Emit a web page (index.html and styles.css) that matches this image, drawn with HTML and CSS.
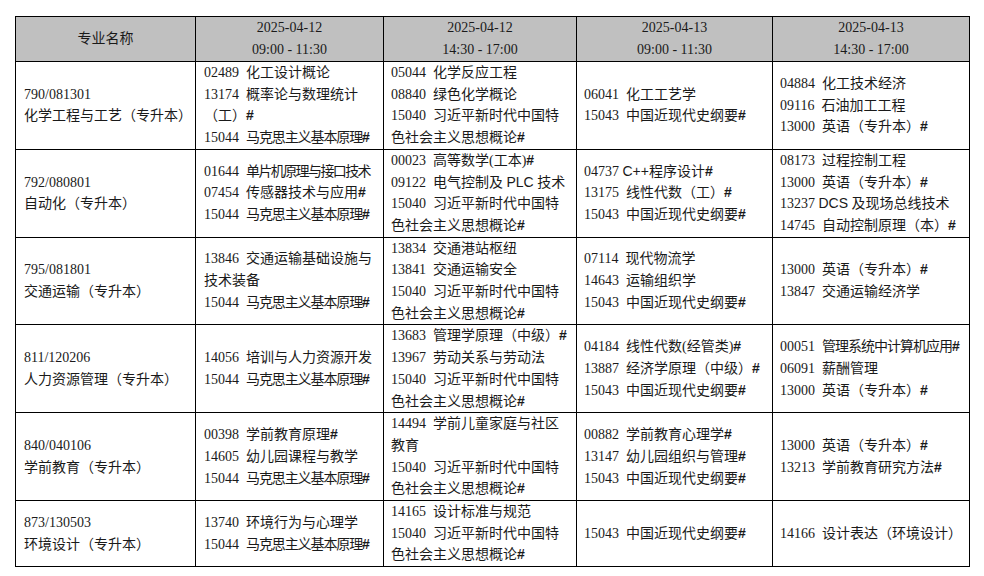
FILE: index.html
```html
<!DOCTYPE html>
<html lang="zh-CN">
<head>
<meta charset="utf-8">
<title>考试安排</title>
<link rel="stylesheet" href="styles.css">
</head>
<body>
<table class="sched">
  <colgroup>
    <col class="w1"><col class="w2"><col class="w3"><col class="w4"><col class="w5">
  </colgroup>
  <thead>
    <tr>
      <th>专业名称</th>
      <th><div>2025-04-12</div><div>09:00 - 11:30</div></th>
      <th><div>2025-04-12</div><div>14:30 - 17:00</div></th>
      <th><div>2025-04-13</div><div>09:00 - 11:30</div></th>
      <th><div>2025-04-13</div><div>14:30 - 17:00</div></th>
    </tr>
  </thead>
  <tbody>
    <tr>
      <td class="major"><div class="ln">790/081301</div><div class="ln">化学工程与工艺（专升本）</div></td>
      <td class="c2">
        <div class="ln">02489  化工设计概论</div>
        <div class="ln">13174  概率论与数理统计</div>
        <div class="ln">（工）<span class="h">#</span></div>
        <div class="ln">15044  <span class="sq1">马克思主义基本原理<span class="h">#</span></span></div>
      </td>
      <td>
        <div class="ln">05044  化学反应工程</div>
        <div class="ln">08840  绿色化学概论</div>
        <div class="ln">15040  习近平新时代中国特</div>
        <div class="ln">色社会主义思想概论<span class="h">#</span></div>
      </td>
      <td>
        <div class="ln">06041  化工工艺学</div>
        <div class="ln">15043  中国近现代史纲要<span class="h">#</span></div>
      </td>
      <td>
        <div class="ln">04884  化工技术经济</div>
        <div class="ln">09116  石油加工工程</div>
        <div class="ln">13000  英语（专升本）<span class="h">#</span></div>
      </td>
    </tr>
    <tr>
      <td class="major"><div class="ln">792/080801</div><div class="ln">自动化（专升本）</div></td>
      <td class="c2">
        <div class="ln">01644  <span class="sq2">单片机原理与接口技术</span></div>
        <div class="ln">07454  传感器技术与应用<span class="h">#</span></div>
        <div class="ln">15044  <span class="sq1">马克思主义基本原理<span class="h">#</span></span></div>
      </td>
      <td>
        <div class="ln">00023  高等数学(工本)<span class="h">#</span></div>
        <div class="ln">09122  电气控制及 <span class="lat">PLC</span> 技术</div>
        <div class="ln">15040  习近平新时代中国特</div>
        <div class="ln">色社会主义思想概论<span class="h">#</span></div>
      </td>
      <td>
        <div class="ln">04737 <span class="lat">C++</span>程序设计<span class="h">#</span></div>
        <div class="ln">13175  线性代数（工）<span class="h">#</span></div>
        <div class="ln">15043  中国近现代史纲要<span class="h">#</span></div>
      </td>
      <td>
        <div class="ln">08173  过程控制工程</div>
        <div class="ln">13000  英语（专升本）<span class="h">#</span></div>
        <div class="ln">13237 <span class="lat">DCS</span> 及现场总线技术</div>
        <div class="ln">14745  自动控制原理（本）<span class="h">#</span></div>
      </td>
    </tr>
    <tr>
      <td class="major"><div class="ln">795/081801</div><div class="ln">交通运输（专升本）</div></td>
      <td class="c2">
        <div class="ln">13846  交通运输基础设施与</div>
        <div class="ln">技术装备</div>
        <div class="ln">15044  <span class="sq1">马克思主义基本原理<span class="h">#</span></span></div>
      </td>
      <td>
        <div class="ln">13834  交通港站枢纽</div>
        <div class="ln">13841  交通运输安全</div>
        <div class="ln">15040  习近平新时代中国特</div>
        <div class="ln">色社会主义思想概论<span class="h">#</span></div>
      </td>
      <td>
        <div class="ln">07114  现代物流学</div>
        <div class="ln">14643  运输组织学</div>
        <div class="ln">15043  中国近现代史纲要<span class="h">#</span></div>
      </td>
      <td>
        <div class="ln">13000  英语（专升本）<span class="h">#</span></div>
        <div class="ln">13847  交通运输经济学</div>
      </td>
    </tr>
    <tr>
      <td class="major"><div class="ln">811/120206</div><div class="ln">人力资源管理（专升本）</div></td>
      <td class="c2">
        <div class="ln">14056  培训与人力资源开发</div>
        <div class="ln">15044  <span class="sq1">马克思主义基本原理<span class="h">#</span></span></div>
      </td>
      <td>
        <div class="ln">13683  管理学原理（中级）<span class="h">#</span></div>
        <div class="ln">13967  劳动关系与劳动法</div>
        <div class="ln">15040  习近平新时代中国特</div>
        <div class="ln">色社会主义思想概论<span class="h">#</span></div>
      </td>
      <td>
        <div class="ln">04184  线性代数(经管类)<span class="h">#</span></div>
        <div class="ln">13887  经济学原理（中级）<span class="h">#</span></div>
        <div class="ln">15043  中国近现代史纲要<span class="h">#</span></div>
      </td>
      <td>
        <div class="ln">00051  <span class="sq3">管理系统中计算机应用<span class="h">#</span></span></div>
        <div class="ln">06091  薪酬管理</div>
        <div class="ln">13000  英语（专升本）<span class="h">#</span></div>
      </td>
    </tr>
    <tr>
      <td class="major"><div class="ln">840/040106</div><div class="ln">学前教育（专升本）</div></td>
      <td class="c2">
        <div class="ln">00398  学前教育原理<span class="h">#</span></div>
        <div class="ln">14605  幼儿园课程与教学</div>
        <div class="ln">15044  <span class="sq1">马克思主义基本原理<span class="h">#</span></span></div>
      </td>
      <td>
        <div class="ln">14494  学前儿童家庭与社区</div>
        <div class="ln">教育</div>
        <div class="ln">15040  习近平新时代中国特</div>
        <div class="ln">色社会主义思想概论<span class="h">#</span></div>
      </td>
      <td>
        <div class="ln">00882  学前教育心理学<span class="h">#</span></div>
        <div class="ln">13147  幼儿园组织与管理<span class="h">#</span></div>
        <div class="ln">15043  中国近现代史纲要<span class="h">#</span></div>
      </td>
      <td>
        <div class="ln">13000  英语（专升本）<span class="h">#</span></div>
        <div class="ln">13213  学前教育研究方法<span class="h">#</span></div>
      </td>
    </tr>
    <tr>
      <td class="major"><div class="ln">873/130503</div><div class="ln">环境设计（专升本）</div></td>
      <td class="c2">
        <div class="ln">13740  环境行为与心理学</div>
        <div class="ln">15044  <span class="sq1">马克思主义基本原理<span class="h">#</span></span></div>
      </td>
      <td>
        <div class="ln">14165  设计标准与规范</div>
        <div class="ln">15040  习近平新时代中国特</div>
        <div class="ln">色社会主义思想概论<span class="h">#</span></div>
      </td>
      <td>
        <div class="ln">15043  中国近现代史纲要<span class="h">#</span></div>
      </td>
      <td>
        <div class="ln">14166  设计表达（环境设计）</div>
      </td>
    </tr>
  </tbody>
</table>
</body>
</html>
```
FILE: styles.css
```css
html, body {
  margin: 0;
  padding: 0;
  background: #ffffff;
}
body {
  padding: 16px 0 0 15px;
  font-family: "Liberation Serif", "Noto Sans CJK SC", serif;
  font-size: 14px;
  color: #1a1a1a;
}
.sched {
  border-collapse: collapse;
  table-layout: fixed;
  width: 954px;
}
.w1 { width: 180px; }
.w2 { width: 188px; }
.w3 { width: 193px; }
.w4 { width: 196px; }
.w5 { width: 197px; }
.sched th, .sched td {
  border: 1px solid #000;
  padding: 0 4px 0 7px;
  vertical-align: middle;
  text-align: left;
}
.sched th {
  background: #c0c0c0;
  font-weight: normal;
  text-align: center;
  line-height: 22px;
  padding: 0;
}
.sched td {
  line-height: 21.7px;
}
.sched td.major,
.sched td.c2 {
  padding-left: 8px;
}
.ln {
  white-space: pre;
}
.h {
  font-family: "Liberation Sans", sans-serif;
  font-weight: bold;
  font-size: 14px;
}
.lat {
  font-family: "Liberation Sans", sans-serif;
}
.sq1 { letter-spacing: -1.1px; }
.sq2 { letter-spacing: -1.6px; }
.sq3 { letter-spacing: -1px; }
```
